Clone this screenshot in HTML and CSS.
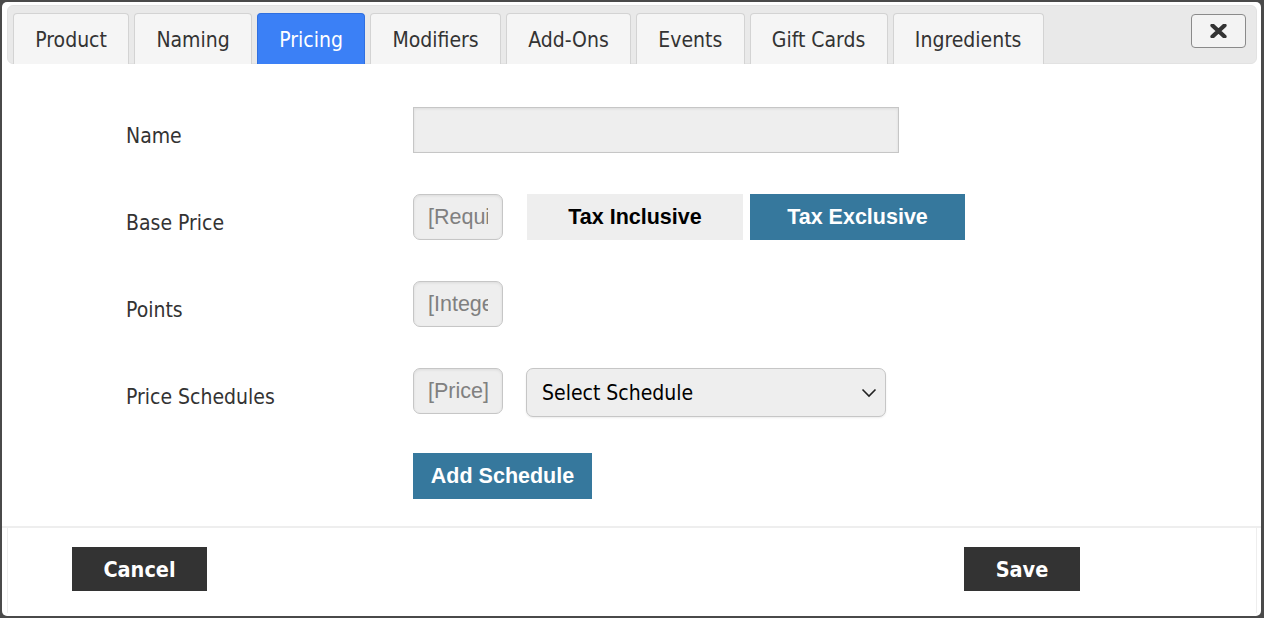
FILE: index.html
```html
<!DOCTYPE html>
<html>
<head>
	<title>Product - Pricing</title>
	<link rel="stylesheet" href="styles.css">
</head>
<body>
	<div class="modal">
		<div class="tabbar">
			<ul class="tabs">
				<li class="tab">Product</li>
				<li class="tab">Naming</li>
				<li class="tab active">Pricing</li>
				<li class="tab">Modifiers</li>
				<li class="tab">Add-Ons</li>
				<li class="tab">Events</li>
				<li class="tab">Gift Cards</li>
				<li class="tab">Ingredients</li>
			</ul>
			<button type="button" class="close-btn" title="Close">
				<svg width="17" height="14" viewBox="0 0 17 14">
					<path d="M2.5 1.5 L14.5 12.5 M14.5 1.5 L2.5 12.5" stroke="#333" stroke-width="4.2" stroke-linecap="round"/>
				</svg>
			</button>
		</div>

		<div class="content">
			<div class="row">
				<label class="field-label">Name</label>
				<div class="controls">
					<input type="text" class="name-input">
				</div>
			</div>
			<div class="row">
				<label class="field-label">Base Price</label>
				<div class="controls">
					<input type="text" class="small-input" placeholder="[Required]">
					<button type="button" class="tax-btn">Tax Inclusive</button>
					<button type="button" class="tax-btn selected">Tax Exclusive</button>
				</div>
			</div>
			<div class="row">
				<label class="field-label">Points</label>
				<div class="controls">
					<input type="text" class="small-input" placeholder="[Integer]">
				</div>
			</div>
			<div class="row schedule-row">
				<label class="field-label">Price Schedules</label>
				<div class="controls">
					<input type="text" class="small-input" placeholder="[Price]">
					<div class="select-wrap">
						<select class="schedule-select">
							<option>Select Schedule</option>
						</select>
						<svg class="chevron" width="16" height="10" viewBox="0 0 16 10">
							<path d="M1.5 1.5 L8 8 L14.5 1.5" fill="none" stroke="#222" stroke-width="1.6"/>
						</svg>
					</div>
				</div>
			</div>
			<div class="row">
				<span class="field-label"></span>
				<div class="controls">
					<button type="button" class="blue-btn">Add Schedule</button>
				</div>
			</div>
		</div>

		<div class="footer">
			<button type="button" class="dark-btn cancel">Cancel</button>
			<button type="button" class="dark-btn save">Save</button>
		</div>
	</div>
</body>
</html>
```

FILE: styles.css
```css
html, body {
	margin: 0;
	height: 100%;
}
body {
	background-color: #4a4a4a;
	font-family: "DejaVu Sans Condensed", "DejaVu Sans", sans-serif;
	font-stretch: condensed;
	color: #333;
	padding: 2px 3px 2px 2px;
	box-sizing: border-box;
}
.modal {
	background-color: #fff;
	border-radius: 5px;
	height: 614px;
	padding-top: 3px;
	box-sizing: border-box;
	overflow: hidden;
}

/* tabs */
.tabbar {
	margin: 0 4px 0 5px;
	height: 59px;
	box-sizing: border-box;
	background-color: #e9e9e9;
	border: 1px solid #e2e2e2;
	border-radius: 6px;
	padding: 7px 10px 0 5px;
	display: flex;
	align-items: flex-start;
}
.tabs {
	list-style: none;
	margin: 0;
	padding: 0;
	display: flex;
	gap: 5px;
	flex: 1;
}
.tab {
	height: 51px;
	box-sizing: border-box;
	padding: 0 21.25px;
	border: 1px solid #d3d3d3;
	border-bottom: none;
	border-radius: 4px 4px 0 0;
	background-color: #f5f5f5;
	font-size: 21px;
	line-height: 53px;
	color: #333;
	white-space: nowrap;
}
.tab.active {
	background-color: #3b80f6;
	border-color: #2f6fe0;
	color: #fff;
}
.close-btn {
	margin-top: 1px;
	width: 55px;
	height: 34px;
	border: 1px solid #8a8a8a;
	border-radius: 4px;
	background-color: #f3f3f3;
	display: flex;
	align-items: center;
	justify-content: center;
	padding: 0;
}

/* form */
.content {
	height: 464px;
	box-sizing: border-box;
	padding-top: 43px;
	border-bottom: 2px solid #eee;
}
.row {
	display: grid;
	grid-template-columns: 287px auto;
	padding-left: 124px;
	margin-bottom: 41px;
}
.schedule-row {
	margin-bottom: 36px;
}
.field-label {
	font-size: 21px;
	line-height: 24px;
	padding-top: 17px;
	color: #333;
}
.controls {
	display: flex;
	align-items: flex-start;
}
input[type="text"] {
	font-family: "Liberation Sans", Arial, sans-serif;
	font-size: 21.5px;
	height: 46px;
	box-sizing: border-box;
	background-color: #eee;
	border: 1px solid #c6c6c6;
	color: #333;
	box-shadow: inset 0 1px 3px rgba(0,0,0,0.08);
}
input::placeholder {
	color: #808080;
}
.name-input {
	width: 486px;
	border-radius: 0;
}
.small-input {
	width: 90px;
	border-radius: 7px;
	padding: 0 14px;
}
.tax-btn {
	height: 46px;
	width: 216px;
	border: none;
	background-color: #eee;
	color: #000;
	font-family: "Liberation Sans", Arial, sans-serif;
	font-weight: bold;
	font-size: 21.5px;
	margin-left: 24px;
}
.tax-btn.selected {
	width: 215px;
	margin-left: 7px;
	background-color: #36789d;
	color: #fff;
}
.select-wrap {
	position: relative;
	margin-left: 23px;
}
.schedule-select {
	appearance: none;
	-webkit-appearance: none;
	width: 360px;
	height: 49px;
	border: 1px solid #c6c6c6;
	border-radius: 7px;
	background-color: #eee;
	font-family: "DejaVu Sans Condensed", "DejaVu Sans", sans-serif;
	font-stretch: condensed;
	font-size: 21px;
	color: #000;
	padding: 0 0 0 15px;
	box-shadow: 0 1px 2px rgba(0,0,0,0.08);
}
.chevron {
	position: absolute;
	right: 9px;
	top: 20px;
	pointer-events: none;
}
.blue-btn {
	height: 46px;
	width: 179px;
	border: none;
	background-color: #36789d;
	color: #fff;
	font-family: "Liberation Sans", Arial, sans-serif;
	font-weight: bold;
	font-size: 21.5px;
}

/* footer */
.footer {
	margin: 0 4px 0 5px;
	height: 85px;
	box-sizing: border-box;
	border-left: 1px solid #eee;
	border-right: 1px solid #eee;
	padding: 19px 0 0 64px;
	display: flex;
	align-items: flex-start;
}
.dark-btn {
	height: 44px;
	border: none;
	background-color: #333;
	color: #fff;
	font-family: "DejaVu Sans Condensed", "DejaVu Sans", sans-serif;
	font-stretch: condensed;
	font-weight: bold;
	font-size: 21.5px;
}
.cancel {
	width: 135px;
}
.save {
	width: 116px;
	margin-left: auto;
	margin-right: 176px;
}
```
